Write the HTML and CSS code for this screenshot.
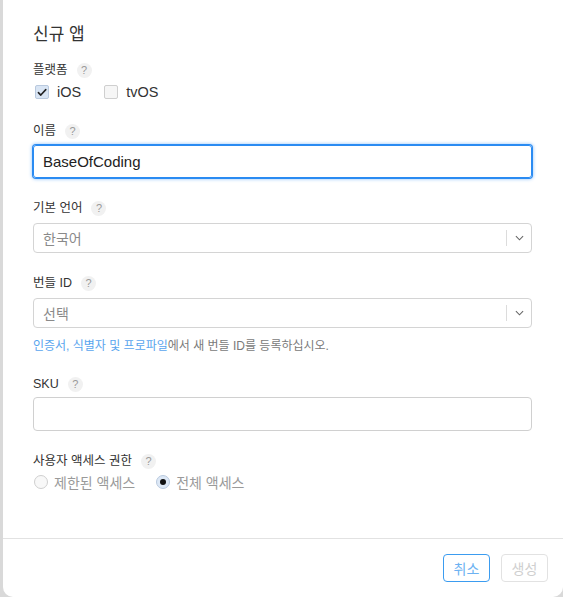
FILE: index.html
```html
<!DOCTYPE html>
<html lang="ko">
<head>
<meta charset="utf-8">
<link rel="stylesheet" href="styles.css">
</head>
<body>
<div class="modal">
  <div class="content">
    <h1 class="title">신규 앱</h1>

    <div class="label first">플랫폼 <span class="help">?</span></div>
    <div class="choices">
      <label class="choice"><span class="box checked"><svg viewBox="0 0 13 13" width="13" height="13"><path d="M2.6 6.6 L5.2 9.3 L10.6 3.4" fill="none" stroke="#222" stroke-width="1.7" stroke-linecap="round" stroke-linejoin="round"/></svg></span>iOS</label>
      <label class="choice"><span class="box"></span>tvOS</label>
    </div>

    <div class="label">이름 <span class="help">?</span></div>
    <div class="input focused">BaseOfCoding</div>

    <div class="label">기본 언어 <span class="help">?</span></div>
    <div class="select"><span class="placeholder">한국어</span><span class="arrow"><svg viewBox="0 0 10 6" width="9" height="6"><path d="M1 1 L5 5 L9 1" fill="none" stroke="#666" stroke-width="1.2"/></svg></span></div>

    <div class="label">번들 ID <span class="help">?</span></div>
    <div class="select"><span class="placeholder">선택</span><span class="arrow"><svg viewBox="0 0 10 6" width="9" height="6"><path d="M1 1 L5 5 L9 1" fill="none" stroke="#666" stroke-width="1.2"/></svg></span></div>
    <p class="hint"><a class="link">인증서, 식별자 및 프로파일</a>에서 새 번들 ID를 등록하십시오.</p>

    <div class="label sku">SKU <span class="help">?</span></div>
    <div class="input tall"></div>

    <div class="label">사용자 액세스 권한 <span class="help">?</span></div>
    <div class="choices radios">
      <label class="choice dim"><span class="radio"></span>제한된 액세스</label>
      <label class="choice dim"><span class="radio on"></span>전체 액세스</label>
    </div>
  </div>
  <div class="footer">
    <button class="btn primary">취소</button>
    <button class="btn disabled">생성</button>
  </div>
</div>
</body>
</html>
```

FILE: styles.css
```css
html, body {
  margin: 0;
  padding: 0;
}
body {
  background: #d9d9d9;
  font-family: "Liberation Sans", "Noto Sans CJK KR", sans-serif;
  color: #333;
  width: 563px;
  height: 597px;
  overflow: hidden;
}
.modal {
  margin-left: 3px;
  width: 560px;
  height: 597px;
  background: #fff;
  border-radius: 0 0 10px 10px;
  display: flex;
  flex-direction: column;
}
.content {
  padding: 25px 31px 0 30px;
  height: 539px;
  box-sizing: border-box;
  border-bottom: 1px solid #e2e2e2;
  display: flex;
  flex-direction: column;
}
.title {
  margin: 0;
  font-size: 17px;
  line-height: 20px;
  font-weight: 400;
  color: #333;
}
.label {
  display: flex;
  align-items: center;
  gap: 9px;
  font-size: 12.5px;
  line-height: 16px;
  height: 16px;
  color: #333;
  margin-top: 22px;
}
.label.first {
  margin-top: 17px;
}
.label.sku {
  margin-top: 22px;
}
.help {
  display: inline-flex;
  align-items: center;
  justify-content: center;
  width: 15px;
  height: 15px;
  border-radius: 50%;
  background: #f1f1f1;
  color: #999;
  font-size: 11px;
  line-height: 1;
}
.choices {
  display: flex;
  gap: 21px;
  margin-top: 5px;
  height: 18px;
  align-items: center;
}
.choices.radios {
  margin-top: 4px;
  gap: 20px;
}
.choice {
  display: flex;
  align-items: center;
  font-size: 14.5px;
  color: #333;
}
.choice.dim {
  color: #9a9a9a;
  font-size: 14px;
}
.box {
  width: 12px;
  height: 12px;
  border: 1px solid #cfcfcf;
  border-radius: 2px;
  background: #f6f6f6;
  margin: 0 8px 0 2px;
  display: inline-flex;
  align-items: center;
  justify-content: center;
}
.box.checked {
  background: #d9e5f4;
  border-color: #b9c9de;
}
.radio {
  width: 12px;
  height: 12px;
  border: 1px solid #cfcfcf;
  border-radius: 50%;
  background: #f8f8f8;
  margin: 0 6px 0 1px;
  position: relative;
}
.radio.on {
  background: #dde8f6;
  border-color: #b9c9de;
}
.radio.on::after {
  content: "";
  position: absolute;
  left: 3px;
  top: 3px;
  width: 6px;
  height: 6px;
  border-radius: 50%;
  background: #111;
}
.input {
  margin-top: 6px;
  height: 33px;
  box-sizing: border-box;
  border: 1px solid #d0d0d0;
  border-radius: 4px;
  padding: 0 9px;
  display: flex;
  align-items: center;
  font-size: 15px;
  color: #222;
}
.input.focused {
  border-color: #2a8bf2;
  box-shadow: 0 0 0 1px #2a8bf2, 0 0 3px 2px rgba(60, 150, 245, 0.35);
  border-radius: 3px;
}
.input.tall {
  margin-top: 5px;
  height: 34px;
}
.select {
  margin-top: 7px;
  height: 30px;
  box-sizing: border-box;
  border: 1px solid #d4d4d4;
  border-radius: 4px;
  display: flex;
  align-items: center;
  justify-content: space-between;
  padding-left: 9px;
}
.placeholder {
  font-size: 14px;
  color: #8a8a8a;
}
.arrow {
  width: 24px;
  height: 16px;
  border-left: 1px solid #dcdcdc;
  display: flex;
  align-items: center;
  justify-content: center;
}
.hint {
  margin: 10px 0 0;
  font-size: 12px;
  line-height: 16px;
  color: #7a7a7a;
}
.link {
  color: #5aa5ee;
}
.footer {
  display: flex;
  justify-content: flex-end;
  gap: 11px;
  padding: 15px 15px 0 0;
}
.btn {
  height: 28px;
  width: 47px;
  border-radius: 4px;
  background: #fff;
  font-family: "Liberation Sans", "Noto Sans CJK KR", sans-serif;
  font-size: 14px;
  padding: 0;
}
.btn.primary {
  border: 1px solid #3b9cf0;
  color: #6db2f2;
}
.btn.disabled {
  border: 1px solid #e2e2e2;
  color: #cfcfcf;
}
```
